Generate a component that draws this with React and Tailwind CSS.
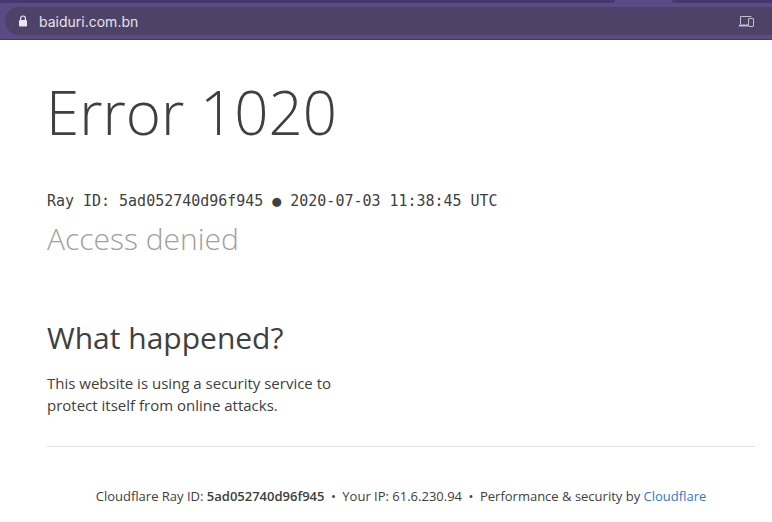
import React from "react";

function LockIcon() {
  return (
    <svg width="10" height="12" viewBox="0 0 10 12" className="text-[#e9e6ee]">
      <path d="M2.6 5V3.4a2.4 2.4 0 0 1 4.8 0V5" fill="none" stroke="currentColor" strokeWidth="1.2" />
      <rect x="1" y="5" width="8" height="6.5" rx="1" fill="currentColor" />
    </svg>
  );
}

function DevicesIcon() {
  return (
    <svg width="15" height="11" viewBox="0 0 15 11" fill="none" stroke="#c3bfcb" strokeWidth="1">
      <path d="M1.5 8V0.5h11" />
      <path d="M0 9.5h9" strokeWidth="2" />
      <rect x="9.5" y="2.5" width="5" height="8" rx="0.5" />
    </svg>
  );
}

function App() {
  return (
    <div className="h-[522px] w-[772px] overflow-hidden bg-white font-['Open_Sans',sans-serif]">
      <div className="h-10 bg-[#5b4a85] border-b border-[#46386c]">
        <div className="flex h-[3px] justify-between">
          <div className="h-full w-[615px] rounded-br-md bg-[#48386f]" />
          <div className="h-full w-[100px] rounded-bl-md bg-[#48386f]" />
        </div>
        <div className="mt-1 flex h-[28px] items-center justify-between rounded-l-[14px] bg-[#4f4268] ml-[5px] pl-[13px] pr-[18px]">
          <div className="flex items-center gap-[11px]">
            <LockIcon />
            <span className="font-['Inter',sans-serif] text-[14px] text-[#e6e3ea]">baiduri.com.bn</span>
          </div>
          <DevicesIcon />
        </div>
      </div>

      <div className="px-[47px]">
        <h1 className="mt-[27px] -ml-px text-[60px] leading-[90px] font-light text-[#404040]">Error 1020</h1>
        <div className="mt-[33px] font-['DejaVu_Sans_Mono',monospace] text-[14.97px] leading-[22px] text-[#404040]">
          Ray ID: 5ad052740d96f945 ● 2020-07-03 11:38:45 UTC
        </div>
        <h2 className="mt-[4px] text-[30px] leading-[45px] font-light text-[#a0a0a0]">Access denied</h2>

        <h2 className="mt-[54px] text-[30px] leading-[45px] text-[#404040]">What happened?</h2>
        <p className="mt-[12px] w-[320px] text-[15px] leading-[22px] text-[#404040]">
          This website is using a security service to protect itself from online attacks.
        </p>
      </div>

      <div className="ml-[47px] mr-[17px] mt-[30px] border-t border-[#e5e5e5] pt-[39px] text-center text-[13px] leading-[20px] text-[#404040]">
        <span>Cloudflare Ray ID: </span>
        <strong className="font-semibold">5ad052740d96f945</strong>
        <span className="mx-[6.5px]">•</span>
        <span>Your IP: 61.6.230.94</span>
        <span className="mx-[6.5px]">•</span>
        <span>Performance &amp; security by </span>
        <span className="text-[#2f7bbf]">Cloudflare</span>
      </div>
    </div>
  );
}

export default App;
